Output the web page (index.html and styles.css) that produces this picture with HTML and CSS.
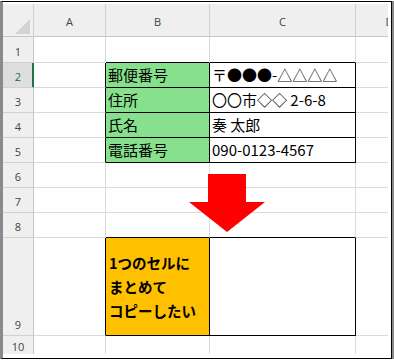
FILE: index.html
```html
<!DOCTYPE html>
<html lang="ja">
<head>
<meta charset="utf-8">
<title>Excel</title>
<link rel="stylesheet" href="styles.css">
</head>
<body>
<div class="shot">
  <div class="frame">
    <div class="sheet">
      <div class="grid">
        <div class="c h corner"><span class="tri"></span></div>
        <div class="c h ch">A</div>
        <div class="c h ch">B</div>
        <div class="c h ch">C</div>
        <div class="c h ch">D</div>

        <div class="c h rh">1</div>
        <div class="c"></div>
        <div class="c bb"></div>
        <div class="c bb"></div>
        <div class="c"></div>

        <div class="c h rh sel">2</div>
        <div class="c br"></div>
        <div class="c lbl br bb">郵便番号</div>
        <div class="c val br bb">〒●●●-△△△△</div>
        <div class="c"></div>

        <div class="c h rh">3</div>
        <div class="c br"></div>
        <div class="c lbl br bb">住所</div>
        <div class="c val br bb">〇〇市◇◇ 2-6-8</div>
        <div class="c"></div>

        <div class="c h rh">4</div>
        <div class="c br"></div>
        <div class="c lbl br bb">氏名</div>
        <div class="c val br bb">奏 太郎</div>
        <div class="c"></div>

        <div class="c h rh">5</div>
        <div class="c br"></div>
        <div class="c lbl br bb">電話番号</div>
        <div class="c val br bb">090-0123-4567</div>
        <div class="c"></div>

        <div class="c h rh">6</div>
        <div class="c"></div>
        <div class="c"></div>
        <div class="c"></div>
        <div class="c"></div>

        <div class="c h rh">7</div>
        <div class="c"></div>
        <div class="c"></div>
        <div class="c"></div>
        <div class="c"></div>

        <div class="c h rh">8</div>
        <div class="c"></div>
        <div class="c bb"></div>
        <div class="c bb"></div>
        <div class="c"></div>

        <div class="c h rh">9</div>
        <div class="c br"></div>
        <div class="c note br bb"><p class="note-text">1つのセルに<br>まとめて<br>コピーしたい</p></div>
        <div class="c br bb"></div>
        <div class="c"></div>

        <div class="c h rh">10</div>
        <div class="c"></div>
        <div class="c"></div>
        <div class="c"></div>
        <div class="c"></div>
      </div>
    </div>
  </div>
  <svg class="arrow" width="77" height="60" viewBox="0 0 77 60" aria-hidden="true">
    <polygon points="19,0 57,0 57,28 76,28 38,58 0,28 19,28" fill="#ff0000"/>
  </svg>
</div>
</body>
</html>
```

FILE: styles.css
```css
html, body {
  margin: 0;
  padding: 0;
  background: #ffffff;
}

.shot {
  position: relative;
  width: 394px;
  height: 360px;
  padding-top: 1px;
  box-sizing: border-box;
  background: #ffffff;
}

.frame {
  width: 392px;
  height: 358px;
  box-sizing: border-box;
  border-top: 1px solid #000000;
  border-right: 1px solid #000000;
  border-bottom: 1px solid #000000;
  border-left: 3px solid #8a8a8a;
  box-shadow: 2px 0 0 #8a8a8a;
  padding-top: 2px;
}

.sheet {
  width: 385px;
  height: 350px;
  overflow: hidden;
}

.grid {
  display: grid;
  grid-template-columns: 31px 72px 104px 146px 68px;
  grid-template-rows: 33px 26px repeat(7, 25px) 98px 22px;
  width: 421px;
}

.c {
  box-sizing: border-box;
  border-right: 1px solid #dadada;
  border-bottom: 1px solid #dadada;
  display: flex;
  align-items: flex-end;
  overflow: hidden;
  white-space: nowrap;
  font-family: "Noto Sans CJK JP", sans-serif;
  font-size: 15px;
  line-height: 15px;
  color: #000000;
}

.h {
  background: #efefef;
  border-right-color: #d0d0d0;
  border-bottom-color: #d0d0d0;
  font-family: "Open Sans", "Noto Sans", sans-serif;
  font-size: 11px;
  line-height: 11px;
  color: #444444;
}

.ch {
  justify-content: center;
  align-items: center;
  padding-top: 3px;
  border-bottom-color: #c6c6c6;
}

.rh {
  justify-content: center;
  padding-bottom: 5px;
  border-right-color: #c6c6c6;
}

.sel {
  background: #dedede;
  color: #1e6b41;
  border-right-color: #217346;
  box-shadow: inset -1px 0 0 #217346;
}

.corner {
  justify-content: flex-end;
  align-items: flex-end;
  padding: 0 3px 2px 0;
  border-bottom-color: #c6c6c6;
}

.tri {
  width: 15px;
  height: 15px;
  background: #d3d3d3;
  clip-path: polygon(100% 0, 100% 100%, 0 100%);
}

.br {
  border-right-color: #000000;
}

.bb {
  border-bottom-color: #000000;
}

.lbl {
  background: #87e08b;
  padding: 0 0 5px 2px;
}

.val {
  padding: 0 0 5px 2px;
}

.note {
  background: #ffc000;
  align-items: center;
  padding-left: 3px;
}

.note-text {
  margin: 0;
  font-weight: bold;
  font-size: 14.5px;
  line-height: 24px;
}

.arrow {
  position: absolute;
  left: 189px;
  top: 174px;
}
```
